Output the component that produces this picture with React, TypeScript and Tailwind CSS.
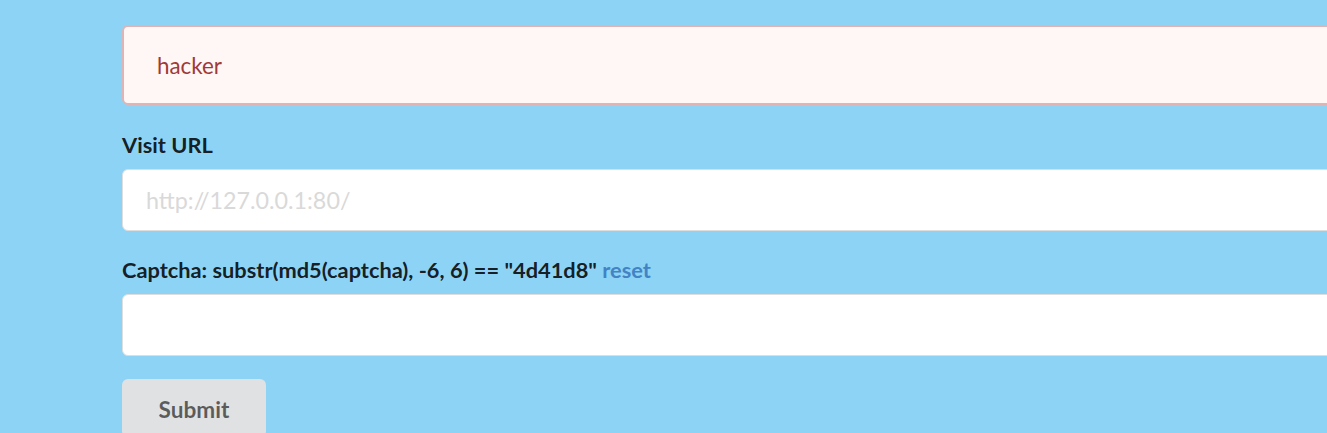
export default function App() {
  return (
    <div className="w-full h-[433px] overflow-hidden bg-[#8dd3f5] font-[Lato,sans-serif]">
      <div className="w-[1600px] pl-[122px] pt-[25px]">
        <div className="flex items-center h-[80px] border-2 border-[#e0b4b4] rounded-[6px] bg-[#fff6f6] pl-[33px] pt-[2px] text-[22.4px] leading-[32px] text-[#9f3a38]">
          hacker
        </div>
        <form className="flex flex-col" onSubmit={(e) => e.preventDefault()}>
          <label className="mt-[25px] h-[30px] text-[21.8px] leading-[30px] font-bold text-black/87">
            Visit URL
          </label>
          <input
            className="mt-[9px] h-[62px] w-full rounded-[6px] border border-[#dedede] bg-white px-[23px] text-[23.3px] outline-none placeholder:text-[#d9d9d9]"
            placeholder="http://127.0.0.1:80/"
          />
          <label className="mt-[24px] h-[30px] text-[21.8px] leading-[30px] font-bold text-black/87">
            Captcha: substr(md5(captcha), -6, 6) == "4d41d8"{" "}
            <a href="#" className="text-[#4183c4]">reset</a>
          </label>
          <input className="mt-[9px] h-[62px] w-full rounded-[6px] border border-[#dedede] bg-white px-[23px] text-[23.3px] outline-none" />
          <div className="mt-[23px]">
            <button
              type="submit"
              className="h-[58px] w-[144px] rounded-[6px] bg-[#e0e1e2] pt-[4px] text-[22.6px] leading-[22.4px] font-bold text-black/60"
            >
              Submit
            </button>
          </div>
        </form>
      </div>
    </div>
  );
}
